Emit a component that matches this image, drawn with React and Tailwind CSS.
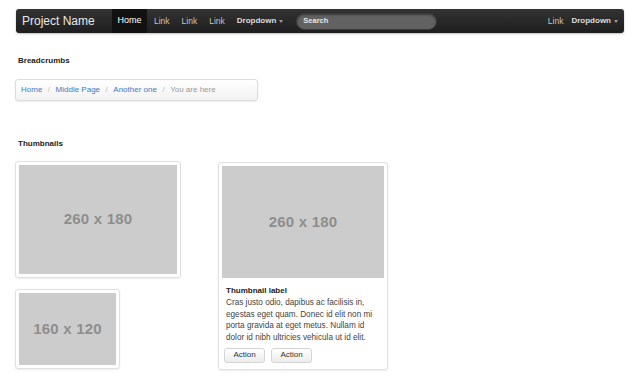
import React from 'react'

const Caret = () => (
  <span className="ml-[3px] inline-block w-0 h-0 border-l-[2.5px] border-r-[2.5px] border-t-[3px] border-l-transparent border-r-transparent border-t-[#999] mt-[1px]"></span>
)

const Placeholder = ({ w, h, label }) => (
  <div
    className={`bg-[#cccccc] flex items-center justify-center ${w} ${h}`}
  >
    <span className="text-[15px] font-bold text-[#8e8e8e] tracking-[0.2px]">{label}</span>
  </div>
)

const App = () => {
  return (
    <div className="w-[640px] h-[385px] bg-white overflow-hidden font-['Liberation_Sans',Arial,sans-serif]">
      {/* navbar */}
      <div className="mx-[16px] mt-[9px] h-[24px] rounded-[3px] bg-gradient-to-b from-[#333333] to-[#1e1e1e] flex items-center shadow-[0_1px_2px_rgba(0,0,0,0.25)]">
        <div className="w-[96px] pl-[6px] text-[12px] text-[#e8e8e8] leading-none">Project Name</div>
        <div className="h-full w-[35px] bg-[#111111] flex items-center justify-center text-[9px] text-white">Home</div>
        <div className="flex items-center text-[8.5px] text-[#c4c4c4]">
          <span className="pl-[7px] pr-[6px]">Link</span>
          <span className="px-[6px]">Link</span>
          <span className="px-[6px]">Link</span>
          <span className="px-[6px] flex items-center font-bold text-[8px] text-[#dddddd]">Dropdown<Caret /></span>
        </div>
        <div className="ml-[7px] w-[141px] h-[17px] rounded-full bg-[#626262] border border-[#3a3a3a] shadow-[inset_0_1px_2px_rgba(0,0,0,0.4)] flex items-center pl-[6px]">
          <span className="text-[7.5px] font-bold text-[#e6e6e6]">Search</span>
        </div>
        <div className="ml-auto flex items-center text-[8.5px] text-[#c4c4c4] pr-[6px]">
          <span className="px-[5px]">Link</span>
          <span className="pl-[3px] flex items-center font-bold text-[8px] text-[#dddddd]">Dropdown<Caret /></span>
        </div>
      </div>

      {/* breadcrumbs */}
      <div className="px-[18px] mt-[23px] text-[8px] font-bold text-[#222] leading-[10px]">Breadcrumbs</div>
      <div className="ml-[15px] mt-[13px] w-[243px] h-[22px] rounded-[3px] border border-[#dcdcdc] bg-gradient-to-b from-white to-[#f2f2f2] shadow-[0_1px_2px_rgba(0,0,0,0.08)] flex items-center pl-[5px] text-[8px]">
        <span className="text-[#3f7abf]">Home</span>
        <span className="text-[#bbbbbb] px-[5.5px]">/</span>
        <span className="text-[#3f7abf]">Middle Page</span>
        <span className="text-[#bbbbbb] px-[5.5px]">/</span>
        <span className="text-[#3f7abf]">Another one</span>
        <span className="text-[#bbbbbb] px-[5.5px]">/</span>
        <span className="text-[#999999]">You are here</span>
      </div>

      {/* thumbnails */}
      <div className="px-[18px] mt-[38px] text-[8px] font-bold text-[#222] leading-[10px]">Thumbnails</div>
      <div className="ml-[15px] mt-[12px] flex items-start gap-[37px]">
        <div className="flex flex-col gap-[11px]">
          <div className="p-[3px] border border-[#e0e0e0] rounded-[3px] shadow-[0_1px_2px_rgba(0,0,0,0.08)] w-fit">
            <Placeholder w="w-[158px]" h="h-[109px]" label="260 x 180" />
          </div>
          <div className="p-[3px] border border-[#e0e0e0] rounded-[3px] shadow-[0_1px_2px_rgba(0,0,0,0.08)] w-fit">
            <Placeholder w="w-[97px]" h="h-[72px]" label="160 x 120" />
          </div>
        </div>
        <div className="mt-[1px] p-[3px] pb-[6px] border border-[#e0e0e0] rounded-[3px] shadow-[0_1px_2px_rgba(0,0,0,0.08)] w-fit">
          <Placeholder w="w-[162px]" h="h-[112px]" label="260 x 180" />
          <div className="pl-[4px] mt-[8px] text-[8px] font-bold text-[#222] leading-[10px]">Thumbnail label</div>
          <p className="pl-[4px] mt-[1px] text-[8.2px] leading-[11.7px] text-[#444]">
            Cras justo odio, dapibus ac facilisis in,<br />
            egestas eget quam. Donec id elit non mi<br />
            porta gravida at eget metus. Nullam id<br />
            dolor id nibh ultricies vehicula ut id elit.
          </p>
          <div className="pl-[2px] mt-[4px] flex gap-[6px]">
            <button className="w-[41px] h-[15px] rounded-[3px] border border-[#d4d4d4] bg-gradient-to-b from-white to-[#ececec] text-[8px] text-[#333] flex items-center justify-center">Action</button>
            <button className="w-[41px] h-[15px] rounded-[3px] border border-[#d4d4d4] bg-gradient-to-b from-white to-[#ececec] text-[8px] text-[#333] flex items-center justify-center">Action</button>
          </div>
        </div>
      </div>
    </div>
  )
}

export default App
